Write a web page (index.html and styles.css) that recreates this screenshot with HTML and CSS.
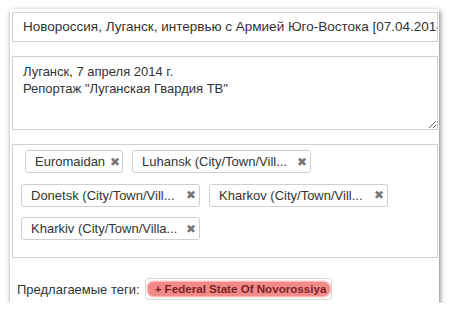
FILE: index.html
```html
<!DOCTYPE html>
<html lang="ru">
<head>
<meta charset="utf-8">
<link rel="stylesheet" href="styles.css">
</head>
<body>
<div class="panel">
  <div class="field title">Новороссия, Луганск, интервью с Армией Юго-Востока [07.04.2014]</div>
  <textarea class="field desc" readonly>Луганск, 7 апреля 2014 г.
Репортаж "Луганская Гвардия ТВ"</textarea>
  <div class="field tags">
    <span class="tag first"><span class="tag-label">Euromaidan</span><span class="tag-x">✖</span></span>
    <span class="tag long"><span class="tag-label">Luhansk (City/Town/Vill...</span><span class="tag-x">✖</span></span>
    <span class="tag long"><span class="tag-label">Donetsk (City/Town/Vill...</span><span class="tag-x">✖</span></span>
    <span class="tag long"><span class="tag-label">Kharkov (City/Town/Vill...</span><span class="tag-x">✖</span></span>
    <span class="tag long"><span class="tag-label">Kharkiv (City/Town/Villa...</span><span class="tag-x">✖</span></span>
  </div>
  <div class="suggest">
    <span class="suggest-label">Предлагаемые теги:</span>
    <span class="suggest-box"><span class="suggest-tag">+ Federal State Of Novorossiya</span></span>
  </div>
</div>
</body>
</html>
```
FILE: styles.css
```css
html, body {
  margin: 0;
  padding: 0;
  background: #ffffff;
}
body {
  font-family: Arial, "Liberation Sans", sans-serif;
  font-size: 13px;
  color: #333333;
}
.panel {
  margin: 9px 0 0 10px;
  width: 429px;
  height: 294px;
  box-sizing: border-box;
  padding: 3px 1px 0 2px;
  background: #ffffff;
  box-shadow: 1px 2px 5px rgba(0, 0, 0, 0.55);
  display: flex;
  flex-direction: column;
}
.field {
  box-sizing: border-box;
  width: 426px;
  border: 1px solid #d0d0d0;
  background: #fff;
  font-family: Arial, "Liberation Sans", sans-serif;
  font-size: 13px;
  color: #333333;
}
.title {
  height: 30px;
  line-height: 28px;
  padding: 0 10px;
  font-size: 13.5px;
  white-space: nowrap;
  overflow: hidden;
}
.desc {
  margin: 14px 0 0 0;
  height: 74px;
  padding: 6px 10px;
  line-height: 17px;
  resize: vertical;
  outline: none;
  display: block;
}
.tags {
  margin-top: 14px;
  height: 114px;
  padding: 5px 8px;
  display: flex;
  flex-wrap: wrap;
  align-content: flex-start;
  column-gap: 9px;
  row-gap: 10.5px;
}
.tag {
  box-sizing: border-box;
  height: 23px;
  border: 1px solid #cfcfcf;
  border-radius: 3px;
  background: #fff;
  display: flex;
  align-items: center;
  padding: 0 3px 0 9px;
  white-space: nowrap;
  font-size: 13px;
  color: #333;
}
.tag.first {
  margin-left: 4px;
  width: 98px;
}
.tag.long {
  width: 179px;
  justify-content: space-between;
}
.tag-label {
  margin-right: 5px;
}
.tag-x {
  font-size: 12px;
  color: #777;
  font-family: "DejaVu Sans", sans-serif;
  font-weight: bold;
  width: 10px;
  text-align: center;
}
.suggest {
  margin-top: 20px;
  display: flex;
  align-items: center;
  padding-left: 5px;
}
.suggest-label {
  font-size: 13px;
  color: #333;
  margin-right: 5px;
}
.suggest-box {
  box-sizing: border-box;
  height: 22px;
  width: 187px;
  border: 1px solid #dadada;
  border-radius: 3px;
  display: flex;
  align-items: center;
  padding: 0 2px 0 2px;
  overflow: visible;
}
.suggest-tag {
  background: #f28a8a;
  box-shadow: 0 0 2px 1px #f4a0a0;
  border-radius: 6px 8px 8px 6px;
  font-weight: bold;
  font-size: 11.6px;
  color: #7a2424;
  line-height: 14px;
  padding: 0 4px 0 7px;
  white-space: nowrap;
}
```
